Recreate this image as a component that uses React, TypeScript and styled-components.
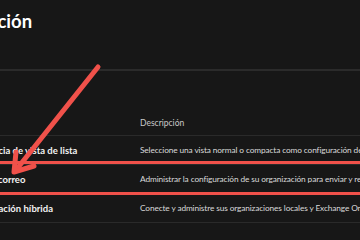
import React from "react";
import styled, { createGlobalStyle, css } from "styled-components";

const GlobalStyle = createGlobalStyle`
  body {
    margin: 0;
    background: #171717;
    font-family: Lato, "Open Sans", sans-serif;
    overflow: hidden;
  }
`;

interface iRow {
  name: string;
  description: string;
  highlighted?: boolean;
}

const rows: iRow[] = [
  {
    name: "Preferencia de vista de lista",
    description:
      "Seleccione una vista normal o compacta como configuración de lista predeterminada",
  },
  {
    name: "Flujo de correo",
    description:
      "Administrar la configuración de su organización para enviar y recibir correo",
    highlighted: true,
  },
  {
    name: "Configuración híbrida",
    description:
      "Conecte y administre sus organizaciones locales y Exchange Online",
  },
];

export default function App() {
  return (
    <Page>
      <GlobalStyle />
      <Header>
        <Title>Configuración</Title>
      </Header>
      <Table>
        <HeadRow>
          <HeadCell>Nombre</HeadCell>
          <HeadCell>Descripción</HeadCell>
        </HeadRow>
        {rows.map((row) => (
          <Row key={row.name} $highlighted={row.highlighted}>
            <Name>{row.name}</Name>
            <Description>{row.description}</Description>
          </Row>
        ))}
      </Table>
      {/* annotation arrow pointing at the highlighted row */}
      <Arrow viewBox="0 0 360 240">
        <g stroke="#f0514a" strokeWidth="5" strokeLinecap="round" fill="none">
          <line x1="98" y1="67" x2="16" y2="170" />
          <polyline points="16,152 14,172 34,166" strokeLinejoin="round" />
        </g>
      </Arrow>
    </Page>
  );
}

const Page = styled.div`
  position: relative;
  width: 360px;
  height: 240px;
  overflow: hidden;
`;

const Header = styled.div`
  height: 61px;
  border-bottom: 2px solid #2b2b2b;
`;

const Title = styled.h1`
  margin: 8px 0 0 -83px;
  font-size: 18.5px;
  line-height: 26px;
  font-weight: 700;
  color: #ffffff;
  white-space: nowrap;
`;

const Table = styled.div`
  margin: 39px 0 0 -38px;
`;

const gridRow = css`
  display: grid;
  grid-template-columns: 178px 1fr;
  align-items: center;
  border-bottom: 1px solid #2a2a2a;
  white-space: nowrap;
`;

const HeadRow = styled.div`
  ${gridRow};
  height: 25px;
`;

const HeadCell = styled.div`
  font-size: 8.5px;
  color: #c9c9c9;
`;

const Row = styled.div<{ $highlighted?: boolean }>`
  ${gridRow};
  position: relative;
  height: 28px;
  ${(p) =>
    p.$highlighted &&
    css`
      &::after {
        content: "";
        position: absolute;
        top: -4px;
        bottom: -2px;
        left: -10px;
        right: -10px;
        border: 3px solid #f0514a;
      }
    `}
`;

const Name = styled.div`
  font-size: 9.5px;
  font-weight: 700;
  color: #f2f2f2;
`;

const Description = styled.div`
  font-size: 8.3px;
  letter-spacing: -0.12px;
  color: #dadada;
`;

const Arrow = styled.svg`
  position: absolute;
  inset: 0;
  width: 360px;
  height: 240px;
  pointer-events: none;
`;
